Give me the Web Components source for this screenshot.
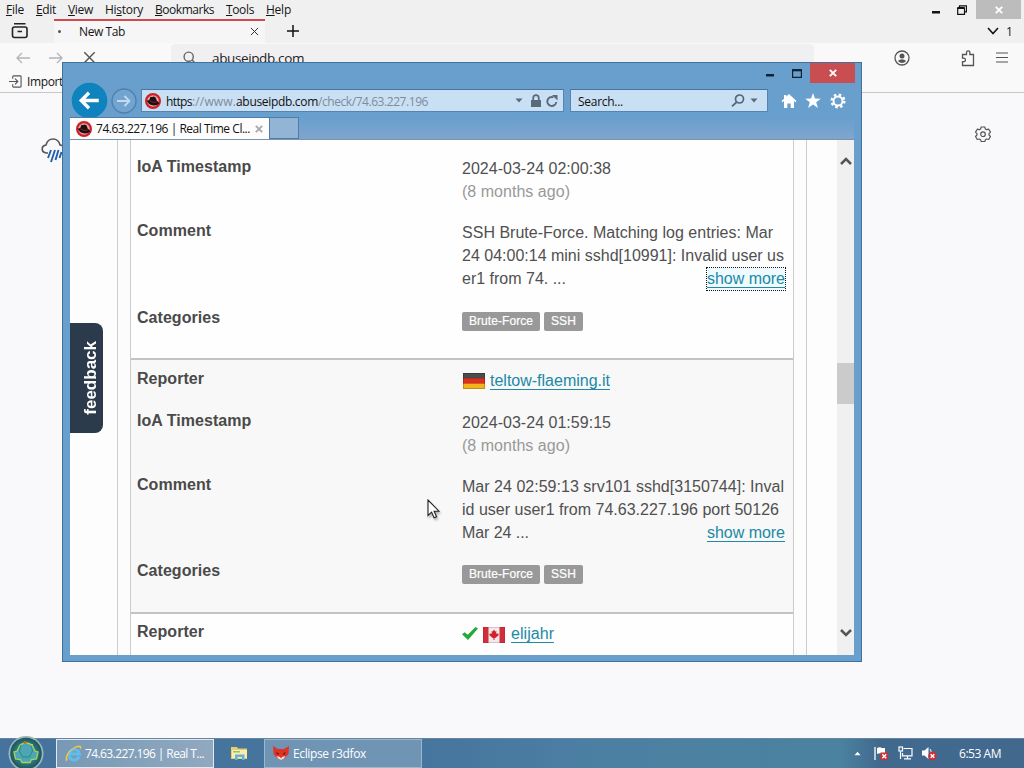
<!DOCTYPE html>
<html lang="en">
<head>
<meta charset="utf-8">
<title>Desktop</title>
<style>
    body { margin: 0; overflow: hidden; }
</style>
</head>
<body>
<desk-top></desk-top>

<script>
// inner markup of every icon, drawn by <ui-icon name="...">
var icons = {
    archive: ['0 0 18 18', '<g fill="none" stroke="#222" stroke-width="1.6"><rect x="1.500" y="5" width="14.500" height="10.500" rx="2"/><path d="M3 1.800h11.500M6.500 9.500h4.500"/></g>'],
    close: ['0 0 10 10', '<path d="M1 1l8 8M9 1L1 9" fill="none" stroke="currentColor" stroke-width="1.1"/>'],
    plus: ['0 0 12 12', '<path d="M6 0v12M0 6h12" stroke="#111" stroke-width="1.5"/>'],
    chevron: ['0 0 12 8', '<path d="M1 1l5 5.500 5-5.500" fill="none" stroke="currentColor" stroke-width="1.600"/>'],
    arrow: ['0 0 12 8', '<path d="M1 1l5 5 5-5" fill="none" stroke="#555" stroke-width="2.500"/>'],
    left: ['0 0 16 12', '<path d="M15 6H2M7 1L2 6l5 5" fill="none" stroke="#b4b4b6" stroke-width="1.300"/>'],
    right: ['0 0 16 12', '<path d="M1 6h13M9 1l5 5-5 5" fill="none" stroke="#b4b4b6" stroke-width="1.300"/>'],
    search: ['0 0 14 14', '<g fill="none" stroke="#666" stroke-width="1.4"><circle cx="5.700" cy="5.700" r="4.600"/><path d="M9 9l4.500 4.500"/></g>'],
    account: ['0 0 16 16', '<circle cx="8" cy="8" r="7" fill="none" stroke="#555" stroke-width="1.3"/><circle cx="8" cy="6" r="2.500" fill="#555"/><path d="M3.800 11q4.200-3.500 8.400 0q-4 4-8.400 0z" fill="#555"/>'],
    puzzle: ['0 0 16 18', '<path d="M2.500 5.500h4V3.600a1.700 1.700 0 013.400 0v1.900h3.600v11H2.500v-3.800h1.200a1.700 1.700 0 000-3.500H2.500z" fill="none" stroke="#555" stroke-width="1.3"/>'],
    menu: ['0 0 12 11', '<path d="M0 1h12M0 5.500h12M0 10h12" stroke="#555" stroke-width="1.2"/>'],
    importer: ['0 0 14 14', '<path d="M4 4V2q0-1 1-1h7q1 0 1 1v10q0 1-1 1H5q-1 0-1-1v-2M0 7h9M6.500 4L9.500 7l-3 3" fill="none" stroke="#555" stroke-width="1.200"/>'],
    weather: ['0 0 26 26', '<path d="M7 16H5.500Q1 15.500 1.200 11.500Q1.500 8.500 5 8Q6.500 2 12 2q5.500 0 7 6q5 .5 5 4.500t-4 3.500" fill="none" stroke="#555" stroke-width="1.600"/><path d="M10 13l-3 8M14 13l-4 12M17.500 13l-3 10M20.500 15l-2 6" stroke="#2460a8" stroke-width="1.900"/>'],
    cog: ['0 0 16 16', '<g fill="none" stroke="#555" stroke-width="1.200"><path d="M6.200 1h3.600l.6 2 1.200.7 2.100-.5 1.800 3-1.500 1.500v1.300l1.500 1.500-1.800 3-2.100-.5-1.200.7-.6 2H6.200l-.6-2-1.200-.7-2.100.5-1.800-3L2 9V7.700L.5 6.200l1.800-3 2.100.5 1.200-.7z" stroke-linejoin="round"/><circle cx="8" cy="8.200" r="2.300"/></g>'],
    minimize: ['0 0 8 3', '<path d="M0 0h8v2.500H0z" fill="currentColor"/>'],
    restore: ['0 0 10 10', '<path d="M2.500 2.500V.8h7v6H8M.7 3h6.800v6.300H.7z" fill="none" stroke="#111" stroke-width="1.200"/><path d="M.5 3h7" stroke="#111" stroke-width="2"/>'],
    maximize: ['0 0 10 9', '<path d="M.6 1h8.800v7.400H.6z" fill="none" stroke="#123" stroke-width="1.200"/><path d="M0 1.200h10" stroke="#123" stroke-width="2.200"/>'],
    cross: ['0 0 8 8', '<path d="M.8 .8l6.400 6.400M7.200 .8L.8 7.200" stroke="currentColor" stroke-width="1.900"/>'],
    back: ['0 0 38 38', '<circle cx="19" cy="19" r="18.300" fill="#0f83bd"/><path d="M28.500 19H11M18.500 11l-8 8 8 8" fill="none" stroke="#fff" stroke-width="3.400"/>'],
    forward: ['0 0 26 26', '<circle cx="13" cy="13" r="12" fill="#73a3cf" stroke="#4c80b0" stroke-width="1.300"/><path d="M6 13h12M13.500 8l5 5-5 5" fill="none" stroke="#c3daf0" stroke-width="1.800"/>'],
    hat: ['0 0 16 16', '<circle cx="8" cy="8" r="6.900" fill="#e9a5a8" stroke="#cf2028" stroke-width="2.200"/><path d="M1.600 7.500q2 .2 2.800-.8l1-3q1.500.4 2.400 0t2.800.8l1.200 3.200q2 1 2.600 2.800-3 2.500-7 1.800T1.600 7.500z" fill="#1c1112"/><path d="M4.500 7.800q3.500 2.500 7.300 1.200" fill="none" stroke="#8d1c20"/>'],
    triangle: ['0 0 8 5', '<path d="M.5 .5h7L4 4.500z" fill="currentColor"/>'],
    lock: ['0 0 12 14', '<path d="M1 6h10v7H1z" fill="#596a7b"/><path d="M3.200 6.500V4.200q0-3 2.800-3t2.800 3v2.300" fill="none" stroke="#596a7b" stroke-width="1.700"/>'],
    refresh: ['0 0 12 12', '<path d="M10.300 7A4.500 4.500 0 117.500 2.300" fill="none" stroke="#596a7b" stroke-width="1.900"/><path d="M6 0h5.500v5.500z" fill="#596a7b"/>'],
    lens: ['0 0 14 13', '<g fill="none" stroke="#52667a" stroke-width="1.700"><circle cx="8.500" cy="5" r="4"/><path d="M5.700 8L1 12.300"/></g>'],
    home: ['0 0 16 14', '<path d="M8 0l7.500 7-1 1.200L13 7v7H9.700V9.500H6.300V14H3V7L1.500 8.200l-1-1.200L3 4.700V1h2.200v1.600z" fill="#fff"/>'],
    star: ['0 0 16 15', '<path d="M8 0l2 5.500 5.800.2-4.600 3.600 1.700 5.600L8 11.600l-4.900 3.300 1.700-5.600L.2 5.700 6 5.500z" fill="#fff"/>'],
    gear: ['0 0 16 16', '<circle cx="8" cy="8" r="6.300" fill="none" stroke="#fff" stroke-width="2.500" stroke-dasharray="2.470 2.478"/><circle cx="8" cy="8" r="4.500" fill="none" stroke="#fff" stroke-width="2"/>'],
    germany: ['0 0 22 16', '<path d="M0 0h22v16H0z" fill="#333"/><path d="M0 5.300h22V16H0z" fill="#d8321f"/><path d="M0 10.700h22V16H0z" fill="#f2b31b"/><path d="M0 0h22v5H0z" fill="#fff" opacity=".12"/><path d="M.5 .5h21v15H.5z" fill="none" stroke="#000" opacity=".2"/>'],
    canada: ['0 0 22 16', '<path d="M0 0h22v16H0z" fill="#f0eaea"/><path d="M0 0h5.500v16H0zM16.500 0H22v16h-5.500z" fill="#d02f3a"/><path d="M11 2.500l1.200 2 1.200-.5-.3 2.400 2.700.4-.5 1.800-3 2.300-.8.200V13h-1v-1.900l-.8-.2-3-2.300-.5-1.800 2.700-.4L8.600 4l1.200.5z" fill="#d3202c"/><path d="M.5 .5h21v15H.5z" fill="none" stroke="#722" opacity=".2"/>'],
    check: ['0 0 16 13', '<path d="M0 7.300l2.700-2.100 3 2.500L13.500 0 16 1.500 6 13z" fill="#22ab3c"/>'],
    orb: ['0 0 38 34', '<defs><radialGradient id="o"><stop offset="0" stop-color="#58b2ad"/><stop offset=".6" stop-color="#288180"/><stop offset="1" stop-color="#1d5360"/></radialGradient></defs><circle cx="19" cy="17.500" r="17.500" fill="#9db7b7"/><circle cx="19" cy="17.500" r="15.800" fill="url(#o)"/><path d="M13 9q6-4 12 0l3 6 3 1-1.500 7-5 .5-1.500 3h-8l-1.500-3-5-.5L7 16l3-1z" fill="#4ca7b4" stroke="#adcf58" stroke-width="1.300"/><path d="M14 9l-1.500 6 3 6h7l3-6L24 9" fill="none" stroke="#2b878a"/><circle cx="18" cy="6.500" r="1.600" fill="#c66a33"/><circle cx="25" cy="9" r="1" fill="#e5c15b"/>'],
    ie: ['0 0 18 18', '<path d="M15 12.300A5.600 5.600 0 1115.300 9.500H5" fill="none" stroke="#5fbdf0" stroke-width="3.200"/><path d="M1 17Q-1 11 6 5t11-4q1 1-.5 4 0-3-2.500-2.500-5 .5-9 5.500T3 15Q2 17.500 1 17z" fill="#f3c440"/>'],
    folder: ['0 0 17 15', '<path d="M0 1h6l1 1.500h9V13H0z" fill="#e8cb73"/><path d="M1 4h15v8H1z" fill="#fbedaa"/><path d="M2 5h7v1.500H2z" fill="#92c36d"/><path d="M4 8.500h9.500V14H11v-3H6.500v3H4z" fill="#62b3df"/>'],
    fox: ['0 0 16 14', '<path d="M0 0l5 3h6l5-3-.5 8-4 4.500L8 14l-3.500-1.500L.5 8z" fill="#df3328"/><path d="M3.500 10l3.500 1 1 1.500 1-1.500 3.500-1-1.500 2.500L8 14l-3-1.500z" fill="#f7dfd5"/><path d="M3 6l3 1.500L5 9zM13 6l-3 1.500L11 9z" fill="#4b1717"/>'],
    flag: ['0 0 15 15', '<path d="M1 1v13" stroke="#fff" stroke-width="1.300"/><path d="M3 2q3-1.500 5 0h3v6H8Q6 6.500 3 8z" fill="#fff"/><path d="M6.500 6.500H14V14H6.500z" fill="#cf2e32"/><path d="M8.300 8.300l3.900 3.900M12.200 8.300l-3.900 3.900" stroke="#fff" stroke-width="1.500"/>'],
    network: ['0 0 15 14', '<g fill="none" stroke="#fff" stroke-width="1.200"><path d="M5.500 2.500H14v7.300H4.500V7M6 12.800h7M9.500 10v3M2.500 5.500V13"/><rect x="1" y="1" width="3.500" height="4"/></g>'],
    volume: ['0 0 15 15', '<path d="M0 4.500h2.500L6.500 1v12L2.500 9.500H0z" fill="#fff"/><path d="M8 3q1.500 2 1 4" fill="none" stroke="#fff"/><circle cx="10.500" cy="10" r="4.300" fill="#cf2e32"/><path d="M8.700 8.200l3.600 3.600M12.300 8.200l-3.600 3.600" stroke="#fff" stroke-width="1.500"/>'],
    pointer: ['0 0 13 20', '<path d="M1 1v15.500l3.600-3.400 2.500 5.700 2.500-1.100-2.500-5.500H12z" fill="#fff" stroke="#222" stroke-width="1.100"/>']
};

class UiIcon extends HTMLElement {
    constructor() {
        super();
        this.attachShadow({ mode: 'open' });
    }
    connectedCallback() {
        var icon = icons[this.getAttribute('name')];
        var box = icon[0].split(' ');
        var w = this.getAttribute('w') || box[2];
        var h = this.getAttribute('h') || box[3];
        this.shadowRoot.innerHTML =
            `<style>
                :host { display: inline-block; flex: none; line-height: 0; }
                svg { display: block; }
            </style>
            <svg width="${w}" height="${h}" viewBox="${icon[0]}">${icon[1]}</svg>`;
    }
}

// one line of text, tracked so that it fills the width given in "w"
class FitText extends HTMLElement {
    constructor() {
        super();
        this.attachShadow({ mode: 'open' });
        this.shadowRoot.innerHTML =
            `<style>
                :host { display: inline-block; flex: none; white-space: pre; }
            </style><span><slot></slot></span>`;
    }
    connectedCallback() {
        var want = Number(this.getAttribute('w'));
        if (!want) return;
        var span = this.shadowRoot.querySelector('span');
        var count = this.textContent.length;
        var natural = span.getBoundingClientRect().width;
        span.style.letterSpacing = ((want - natural) / count) + 'px';
    }
}

/* the browser that fills the desktop */
class FoxWindow extends HTMLElement {
    constructor() {
        super();
        this.attachShadow({ mode: 'open' });
        this.shadowRoot.innerHTML =
            `<style>
                :host { display: flex; flex-direction: column; height: 738px; background: #f9f9fb; color: #151515; font: 12px "Open Sans", "Noto Sans", sans-serif; }
                .row { display: flex; align-items: center; box-sizing: border-box; flex: none; }
                .menu { height: 20px; padding: 0 0 1px 6px; gap: 12px; background: #f0f0f1; }
                .menu u { text-underline-offset: 1px; }
                .buttons { display: flex; align-items: center; height: 19px; margin-left: auto; }
                .x { display: flex; align-items: center; justify-content: center; width: 45px; height: 19px; margin: 0 3px 0 9px; background: #bcbcbc; color: #fff; }
                .tabs { height: 23px; padding: 0 13px 1px 11px; background: #f0f0f1; }
                .tab { display: flex; align-items: center; box-sizing: border-box; width: 211px; height: 24px; margin: -1px 0 0 25px; padding: 0 6px 0 4px; border-top: 2px solid #d04a50; background: #f6f6f7; }
                .tab i { width: 3px; height: 3px; margin-right: 18px; border-radius: 2px; background: #555; }
                .tab ui-icon { margin-left: auto; color: #333; }
                .tools { height: 29px; padding: 0 16px 0 15px; background: #f9f9fa; }
                .url { display: flex; align-items: center; box-sizing: border-box; width: 643px; height: 27px; margin-left: 75px; padding-left: 12px; border-radius: 4px; background: #f0f0f3; font-size: 13.500px; color: #222; }
                .marks { height: 21px; padding: 0 0 2px 9px; border-bottom: 1px solid #c8c8cb; background: #f9f9fa; }
                .page { display: flex; justify-content: space-between; padding: 33px 33px 0 41px; }
            </style>
            <div class="row menu">
                <fit-text w="18"><u>F</u>ile</fit-text>
                <fit-text w="20"><u>E</u>dit</fit-text>
                <fit-text w="25"><u>V</u>iew</fit-text>
                <fit-text w="38">Hi<u>s</u>tory</fit-text>
                <fit-text w="59"><u>B</u>ookmarks</fit-text>
                <fit-text w="28"><u>T</u>ools</fit-text>
                <fit-text w="25"><u>H</u>elp</fit-text>
                <div class="buttons">
                    <ui-icon name="minimize" style="margin: 5px 17px 0 0"></ui-icon>
                    <ui-icon name="restore"></ui-icon>
                    <span class="x"><ui-icon name="cross"></ui-icon></span>
                </div>
            </div>
            <div class="row tabs">
                <ui-icon name="archive"></ui-icon>
                <div class="tab"><i></i><fit-text w="46">New Tab</fit-text><ui-icon name="close" w="9" h="9"></ui-icon></div>
                <ui-icon name="plus" style="margin-left: 22px"></ui-icon>
                <ui-icon name="chevron" style="margin: 0 7px 0 auto"></ui-icon>
                <fit-text w="5">1</fit-text>
            </div>
            <div class="row tools">
                <ui-icon name="left"></ui-icon>
                <ui-icon name="right" style="margin-left: 17px"></ui-icon>
                <ui-icon name="close" w="13" h="13" style="margin-left: 19px; color: #555"></ui-icon>
                <div class="url"><ui-icon name="search"></ui-icon><fit-text w="92" style="margin-left: 15px">abuseipdb.com</fit-text></div>
                <ui-icon name="account" style="margin-left: auto"></ui-icon>
                <ui-icon name="puzzle" style="margin-left: 50px"></ui-icon>
                <ui-icon name="menu" style="margin-left: 20px"></ui-icon>
            </div>
            <div class="row marks">
                <ui-icon name="importer" w="13" h="13"></ui-icon>
                <fit-text w="36" style="margin-left: 5px">Import</fit-text>
            </div>
            <div class="page">
                <ui-icon name="weather" style="margin-top: 11px"></ui-icon>
                <ui-icon name="cog"></ui-icon>
            </div>`;
    }
}

/* frame, address bar and tabs of the front window; the page is slotted */
class IeWindow extends HTMLElement {
    constructor() {
        super();
        this.attachShadow({ mode: 'open' });
        this.shadowRoot.innerHTML =
            `<style>
                :host { display: flex; flex-direction: column; box-sizing: border-box; width: 800px; height: 600px; padding: 0 7px 6px; border: 1px solid #44719c; background: #689fcd; color: #111; font: 12px "Open Sans", "Noto Sans", sans-serif; }
                div { box-sizing: border-box; }
                .title { display: flex; align-items: flex-start; justify-content: flex-end; height: 20px; margin-right: -1px; }
                .x { display: flex; align-items: center; justify-content: center; width: 45px; height: 20px; margin-left: 8px; background: #c84e51; color: #fff; }
                .bar { display: flex; align-items: center; height: 35px; padding-right: 8px; }
                .field { display: flex; align-items: center; height: 23px; border: 1px solid #5485b2; border-top-color: #4375a5; background: #c9dff3; color: #596a7b; }
                .field fit-text { margin-top: 1px; }
                .address { width: 423px; margin-left: 4px; padding: 0 5px 0 3px; }
                .address fit-text { color: #7d8c9b; }
                .address fit-text.dark { color: #111; }
                .search { width: 198px; margin-left: 6px; padding: 0 9px 0 7px; }
                .tabs { display: flex; height: 21px; background: linear-gradient(#699fcd, #7fa5ce); }
                .tab { display: flex; align-items: center; width: 200px; height: 22px; padding: 0 6px; margin-top: -1px; background: #fdfdfe; border: 1px solid #4f7ca8; border-width: 1px 1px 0 0; }
                .new { width: 29px; height: 22px; margin-top: -1px; border: 1px solid #4f7ca8; border-left: 0; background: #92b4d5; }
                .client { flex: 1; min-height: 0; overflow: hidden; border-top: 1px solid #7893aa; background: #fdfdfd; }
            </style>
            <div class="title">
                <ui-icon name="minimize" style="margin: 11px 18px 0 0; color: #123"></ui-icon>
                <ui-icon name="maximize" style="margin-top: 6px"></ui-icon>
                <span class="x"><ui-icon name="cross"></ui-icon></span>
            </div>
            <div class="bar">
                <ui-icon name="back" w="37" h="37" style="margin-left: 1px"></ui-icon>
                <ui-icon name="forward" style="margin-left: 3px"></ui-icon>
                <div class="field address">
                    <ui-icon name="hat"></ui-icon>
                    <fit-text class="dark" w="26" style="margin-left: 5px">https</fit-text><fit-text w="44">://www.</fit-text><fit-text class="dark" w="82">abuseipdb.com</fit-text><fit-text w="110">/check/74.63.227.196</fit-text>
                    <ui-icon name="triangle" style="margin-left: auto"></ui-icon>
                    <ui-icon name="lock" style="margin-left: 7px"></ui-icon>
                    <ui-icon name="refresh" style="margin-left: 4px"></ui-icon>
                </div>
                <div class="field search">
                    <fit-text w="45" style="color: #111">Search...</fit-text>
                    <ui-icon name="lens" style="margin-left: auto"></ui-icon>
                    <ui-icon name="triangle" style="margin-left: 5px"></ui-icon>
                </div>
                <ui-icon name="home" style="margin-left: auto"></ui-icon>
                <ui-icon name="star" style="margin-left: 8px"></ui-icon>
                <ui-icon name="gear" style="margin-left: 9px"></ui-icon>
            </div>
            <div class="tabs">
                <div class="tab">
                    <ui-icon name="hat"></ui-icon>
                    <fit-text w="154" style="margin-left: 4px">74.63.227.196 | Real Time Cl...</fit-text>
                    <ui-icon name="cross" style="margin-left: auto; color: #aaa"></ui-icon>
                </div>
                <div class="new"></div>
            </div>
            <div class="client"><slot></slot></div>`;
    }
}

class ScrollBar extends HTMLElement {
    constructor() {
        super();
        this.attachShadow({ mode: 'open' });
        this.shadowRoot.innerHTML =
            `<style>
                :host { display: flex; flex-direction: column; align-items: center; box-sizing: border-box; width: 17px; padding: 17px 0 18px; background: #f0f0f0; }
                div { width: 17px; height: 41px; margin: 198px 0 auto; background: #cbcbcb; }
            </style>
            <ui-icon name="arrow" style="transform: scaleY(-1)"></ui-icon>
            <div></div>
            <ui-icon name="arrow"></ui-icon>`;
    }
}

class FeedbackTab extends HTMLElement {
    constructor() {
        super();
        this.attachShadow({ mode: 'open' });
        this.shadowRoot.innerHTML =
            `<style>
                :host { display: flex; align-items: center; justify-content: center; box-sizing: border-box; width: 33px; height: 110px; padding-left: 8px; border-radius: 0 8px 8px 0; background: #2c3b4b; }
                span { writing-mode: vertical-rl; transform: rotate(180deg); color: #fff; font: bold 17px "Liberation Sans", sans-serif; }
            </style>
            <span><slot></slot></span>`;
    }
}

/* a label with its value, "h" is the distance to the next one */
class ReportField extends HTMLElement {
    constructor() {
        super();
        this.attachShadow({ mode: 'open' });
    }
    connectedCallback() {
        this.shadowRoot.innerHTML =
            `<style>
                :host { display: grid; grid-template-columns: 325px 324px; height: ${this.getAttribute('h')}px; line-height: 23px; }
                b { letter-spacing: 0.04px; color: #4a4a4a; }
                .value { display: flex; flex-direction: column; align-items: flex-start; padding-top: 2px; }
            </style>
            <b>${this.getAttribute('label')}</b>
            <div class="value"><slot></slot></div>`;
    }
}

class CategoryBadge extends HTMLElement {
    constructor() {
        super();
        this.attachShadow({ mode: 'open' });
        this.shadowRoot.innerHTML =
            `<style>
                :host { display: inline-block; box-sizing: border-box; height: 19px; padding: 0 7px; border-radius: 2px; background: #999; color: #fff; font: 12px/19px "Liberation Sans", sans-serif; -webkit-text-stroke: 0.2px #fff; }
            </style><slot></slot>`;
    }
}

class ReportPage extends HTMLElement {
    constructor() {
        super();
        this.attachShadow({ mode: 'open' });
        this.shadowRoot.innerHTML =
            `<style>
                :host { display: flex; height: 100%; position: relative; color: #505050; font: 16px "Liberation Sans", Arial, sans-serif; }
                .card { box-sizing: border-box; width: 690px; margin: 0 30px 0 47px; padding: 0 12px; border: 1px solid #ccc; border-width: 0 1px; background: #fcfcfc; }
                .table { box-sizing: border-box; height: 100%; border: 1px solid #ccc; border-width: 0 1px; background: #fefefe; }
                .report { box-sizing: border-box; padding: 7px 6px 0; height: 254px; border-bottom: 2px solid #c3c3c3; }
                .first { height: 220px; padding-top: 15px; }
                .odd { background: #f8f8f8; }
                .last { height: 40px; padding-top: 6px; border: 0; }
                .ago { color: #999; }
                .line { display: flex; align-items: center; height: 23px; }
                .more { width: 323px; justify-content: space-between; }
                .tags { gap: 4px; margin-top: 2px; }
                a { color: #2089a5; border-bottom: 1px solid #2089a5; line-height: 17px; display: inline-block; }
                .focus { display: flex; align-items: center; height: 22px; outline: 1px dotted #111; background: #effaff; }
                feedback-tab { position: absolute; left: 0; top: 183px; }
                scroll-bar { margin-left: auto; }
            </style>
            <div class="card"><div class="table">
                <div class="report first">
                    <report-field label="IoA Timestamp" h="64"><fit-text w="149">2024-03-24 02:00:38</fit-text><fit-text class="ago" w="108">(8 months ago)</fit-text></report-field>
                    <report-field label="Comment" h="87">
                        <fit-text w="311">SSH Brute-Force. Matching log entries: Mar</fit-text>
                        <fit-text w="322">24 04:00:14 mini sshd[10991]: Invalid user us</fit-text>
                        <div class="line more"><fit-text w="104">er1 from 74. ...</fit-text><span class="focus"><a><fit-text w="78">show more</fit-text></a></span></div>
                    </report-field>
                    <report-field label="Categories" h="30"><div class="line tags"><category-badge><fit-text w="64">Brute-Force</fit-text></category-badge><category-badge><fit-text w="25">SSH</fit-text></category-badge></div></report-field>
                </div>
                <div class="report odd">
                    <report-field label="Reporter" h="42"><div class="line"><ui-icon name="germany" style="margin: 1px 5px 0 1px"></ui-icon><a><fit-text w="120">teltow-flaeming.it</fit-text></a></div></report-field>
                    <report-field label="IoA Timestamp" h="64"><fit-text w="149">2024-03-24 01:59:15</fit-text><fit-text class="ago" w="108">(8 months ago)</fit-text></report-field>
                    <report-field label="Comment" h="86">
                        <fit-text w="322">Mar 24 02:59:13 srv101 sshd[3150744]: Inval</fit-text>
                        <fit-text w="317">id user user1 from 74.63.227.196 port 50126</fit-text>
                        <div class="line more"><fit-text w="67">Mar 24 ...</fit-text><a><fit-text w="78">show more</fit-text></a></div>
                    </report-field>
                    <report-field label="Categories" h="30"><div class="line tags"><category-badge><fit-text w="64">Brute-Force</fit-text></category-badge><category-badge><fit-text w="25">SSH</fit-text></category-badge></div></report-field>
                </div>
                <div class="report last">
                    <report-field label="Reporter" h="30"><div class="line"><ui-icon name="check"></ui-icon><ui-icon name="canada" style="margin: 2px 6px 0 5px"></ui-icon><a><fit-text w="43">elijahr</fit-text></a></div></report-field>
                </div>
            </div></div>
            <scroll-bar></scroll-bar>
            <feedback-tab>feedback</feedback-tab>`;
    }
}

class TaskBar extends HTMLElement {
    constructor() {
        super();
        this.attachShadow({ mode: 'open' });
        this.shadowRoot.innerHTML =
            `<style>
                :host { display: flex; align-items: center; box-sizing: border-box; height: 30px; padding: 0 23px 0 7px; background: linear-gradient(90deg, #45739e 0, #46759d 430px, #4c80a3 600px, #4b829f 840px, #41698e 880px, #42688e 100%); box-shadow: inset 0 1px #66859f; color: #fff; font: 12px "Open Sans", "Noto Sans", sans-serif; }
                .task { display: flex; align-items: center; box-sizing: border-box; width: 158px; height: 29px; padding-left: 8px; border: 1px solid #9db6ca; background: #7094b4; }
                .active { border-color: #e1eaf1; background: linear-gradient(90deg, #7898b5, #91a9bf); }
                .task fit-text { margin-left: 4px; }
            </style>
            <ui-icon name="orb" style="margin-right: 11px"></ui-icon>
            <div class="task active"><ui-icon name="ie" w="17" h="17"></ui-icon><fit-text w="119" style="margin-left: 3px">74.63.227.196 | Real T...</fit-text></div>
            <ui-icon name="folder" style="margin: 0 16px 0 17px"></ui-icon>
            <div class="task"><ui-icon name="fox"></ui-icon><fit-text w="73">Eclipse r3dfox</fit-text></div>
            <ui-icon name="triangle" w="7" h="5" style="margin-left: auto; transform: scaleY(-1)"></ui-icon>
            <ui-icon name="flag" style="margin-left: 13px"></ui-icon>
            <ui-icon name="network" style="margin-left: 9px"></ui-icon>
            <ui-icon name="volume" style="margin: 0 22px 0 9px"></ui-icon>
            <fit-text w="42">6:53 AM</fit-text>`;
    }
}

class DeskTop extends HTMLElement {
    constructor() {
        super();
        this.attachShadow({ mode: 'open' });
        this.shadowRoot.innerHTML =
            `<style>
                :host { display: block; position: relative; width: 1024px; height: 768px; overflow: hidden; }
                ie-window { position: absolute; left: 62px; top: 62px; }
                .pointer { position: absolute; left: 427px; top: 499px; filter: drop-shadow(1px 2px 1px rgba(0, 0, 0, 0.3)); }
            </style>
            <fox-window></fox-window>
            <task-bar></task-bar>
            <ie-window><report-page></report-page></ie-window>
            <ui-icon class="pointer" name="pointer"></ui-icon>`;
    }
}

customElements.define('ui-icon', UiIcon);
customElements.define('desk-top', DeskTop);
customElements.define('fox-window', FoxWindow);
customElements.define('ie-window', IeWindow);
customElements.define('report-page', ReportPage);
customElements.define('report-field', ReportField);
customElements.define('category-badge', CategoryBadge);
customElements.define('scroll-bar', ScrollBar);
customElements.define('feedback-tab', FeedbackTab);
customElements.define('task-bar', TaskBar);
// the texts are measured, so they come last
customElements.define('fit-text', FitText);
</script>
</body>
</html>
